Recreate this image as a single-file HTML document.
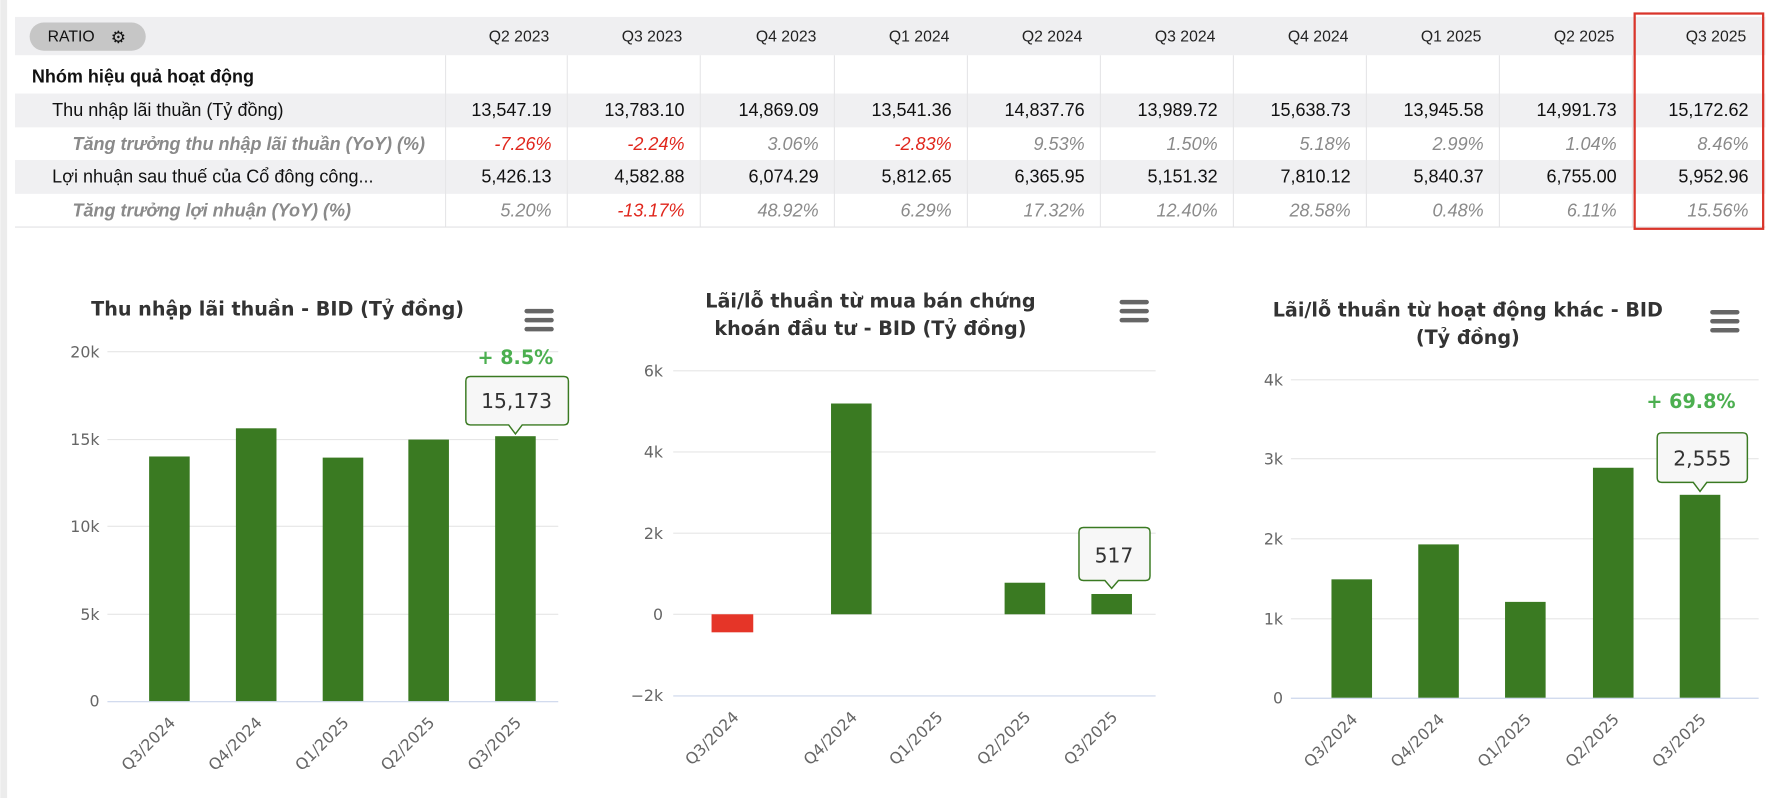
<!DOCTYPE html>
<html><head><meta charset="utf-8"><style>
html,body{margin:0;padding:0;background:#fff;overflow:hidden}
svg{display:block}
.t{font-family:"Liberation Sans",sans-serif}
.c{font-family:"DejaVu Sans","Liberation Sans",sans-serif}
</style></head><body>
<svg width="1768" height="798" viewBox="0 0 1568 708" xmlns="http://www.w3.org/2000/svg">
<rect x="0" y="0" width="1568" height="708" fill="#fff"/>
<rect x="0" y="0" width="6" height="708" fill="#ececec"/>
<!-- table -->
<g class="t">
<rect x="13" y="15" width="1553" height="34" fill="#efeff1"/>
<rect x="26" y="20" width="103" height="25" rx="12.5" fill="#c6c6c6"/>
<text x="42" y="37" font-size="14" fill="#111">RATIO</text>
<text x="98" y="38" font-size="15" fill="#111">⚙</text>
<g font-size="14" fill="#222" text-anchor="end">
<text x="487" y="37">Q2 2023</text><text x="605" y="37">Q3 2023</text><text x="724" y="37">Q4 2023</text><text x="842" y="37">Q1 2024</text><text x="960" y="37">Q2 2024</text><text x="1078" y="37">Q3 2024</text><text x="1196" y="37">Q4 2024</text><text x="1314" y="37">Q1 2025</text><text x="1432" y="37">Q2 2025</text><text x="1549" y="37">Q3 2025</text>
</g>
<rect x="13" y="83" width="1553" height="30" fill="#f0f0f2"/>
<rect x="13" y="142" width="1553" height="30" fill="#f0f0f2"/>
<g stroke="#e6e6e8" stroke-width="1">
<line x1="395" y1="49" x2="395" y2="201"/><line x1="503" y1="49" x2="503" y2="201"/><line x1="621" y1="49" x2="621" y2="201"/><line x1="740" y1="49" x2="740" y2="201"/><line x1="858" y1="49" x2="858" y2="201"/><line x1="976" y1="49" x2="976" y2="201"/><line x1="1094" y1="49" x2="1094" y2="201"/><line x1="1212" y1="49" x2="1212" y2="201"/><line x1="1330" y1="49" x2="1330" y2="201"/><line x1="1448" y1="49" x2="1448" y2="201"/>
</g>
<line x1="13" y1="201.5" x2="1566" y2="201.5" stroke="#e2e2e4"/>
<text x="28" y="73" font-size="16" font-weight="bold" fill="#111">Nhóm hiệu quả hoạt động</text>
<text x="46" y="103" font-size="16" fill="#111">Thu nhập lãi thuần (Tỷ đồng)</text>
<text x="64" y="133" font-size="16" font-weight="bold" font-style="italic" fill="#8a8a8a">Tăng trưởng thu nhập lãi thuần (YoY) (%)</text>
<text x="46" y="162" font-size="16" fill="#111">Lợi nhuận sau thuế của Cổ đông công...</text>
<text x="64" y="192" font-size="16" font-weight="bold" font-style="italic" fill="#8a8a8a">Tăng trưởng lợi nhuận (YoY) (%)</text>
<g font-size="16" fill="#111" text-anchor="end">
<text x="489" y="103">13,547.19</text><text x="607" y="103">13,783.10</text><text x="726" y="103">14,869.09</text><text x="844" y="103">13,541.36</text><text x="962" y="103">14,837.76</text><text x="1080" y="103">13,989.72</text><text x="1198" y="103">15,638.73</text><text x="1316" y="103">13,945.58</text><text x="1434" y="103">14,991.73</text><text x="1551" y="103">15,172.62</text>
<text x="489" y="162">5,426.13</text><text x="607" y="162">4,582.88</text><text x="726" y="162">6,074.29</text><text x="844" y="162">5,812.65</text><text x="962" y="162">6,365.95</text><text x="1080" y="162">5,151.32</text><text x="1198" y="162">7,810.12</text><text x="1316" y="162">5,840.37</text><text x="1434" y="162">6,755.00</text><text x="1551" y="162">5,952.96</text>
</g>
<g font-size="16" font-style="italic" fill="#8a8a8a" text-anchor="end">
<text x="489" y="133" fill="#e0261c">-7.26%</text><text x="607" y="133" fill="#e0261c">-2.24%</text><text x="726" y="133">3.06%</text><text x="844" y="133" fill="#e0261c">-2.83%</text><text x="962" y="133">9.53%</text><text x="1080" y="133">1.50%</text><text x="1198" y="133">5.18%</text><text x="1316" y="133">2.99%</text><text x="1434" y="133">1.04%</text><text x="1551" y="133">8.46%</text>
<text x="489" y="192">5.20%</text><text x="607" y="192" fill="#e0261c">-13.17%</text><text x="726" y="192">48.92%</text><text x="844" y="192">6.29%</text><text x="962" y="192">17.32%</text><text x="1080" y="192">12.40%</text><text x="1198" y="192">28.58%</text><text x="1316" y="192">0.48%</text><text x="1434" y="192">6.11%</text><text x="1551" y="192">15.56%</text>
</g>
<rect x="1450" y="12" width="114" height="191" fill="none" stroke="#d9352b" stroke-width="2"/>
</g>

<!-- charts -->
<g class="c">
<!-- chart 1 -->
<text x="246" y="280" font-size="17" font-weight="bold" fill="#333" text-anchor="middle">Thu nhập lãi thuần - BID (Tỷ đồng)</text>
<g fill="#666"><rect x="465" y="274" width="26" height="4" rx="2"/><rect x="465" y="282" width="26" height="4" rx="2"/><rect x="465" y="290" width="26" height="4" rx="2"/></g>
<g stroke="#e6e6e6"><line x1="95" y1="312" x2="495" y2="312"/><line x1="95" y1="390" x2="495" y2="390"/><line x1="95" y1="467" x2="495" y2="467"/><line x1="95" y1="545" x2="495" y2="545"/></g>
<line x1="95" y1="622.5" x2="495" y2="622.5" stroke="#ccd6eb"/>
<g font-size="14" fill="#666" text-anchor="end"><text x="88" y="317">20k</text><text x="88" y="395">15k</text><text x="88" y="472">10k</text><text x="88" y="550">5k</text><text x="88" y="627">0</text></g>
<g fill="#3a7a22"><rect x="132" y="405" width="36" height="217"/><rect x="209" y="380" width="36" height="242"/><rect x="286" y="406" width="36" height="216"/><rect x="362" y="390" width="36" height="232"/><rect x="439" y="387" width="36" height="235"/></g>
<text x="457" y="323" font-size="17" font-weight="bold" fill="#4caf50" text-anchor="middle">+ 8.5%</text>
<path d="M417 334 H500 Q504 334 504 338 V373 Q504 377 500 377 H463 L457 385 L451 377 H417 Q413 377 413 373 V338 Q413 334 417 334 Z" fill="#f7f7f7" stroke="#3a7a22" stroke-width="1.3"/>
<text x="458" y="362" font-size="18" fill="#333" text-anchor="middle">15,173</text>
<g font-size="14" fill="#666" text-anchor="end">
<text transform="translate(156,642) rotate(-45)">Q3/2024</text><text transform="translate(233,642) rotate(-45)">Q4/2024</text><text transform="translate(310,642) rotate(-45)">Q1/2025</text><text transform="translate(386,642) rotate(-45)">Q2/2025</text><text transform="translate(463,642) rotate(-45)">Q3/2025</text>
</g>

<!-- chart 2 -->
<text x="772" y="273" font-size="17" font-weight="bold" fill="#333" text-anchor="middle">Lãi/lỗ thuần từ mua bán chứng</text>
<text x="772" y="297" font-size="17" font-weight="bold" fill="#333" text-anchor="middle">khoán đầu tư - BID (Tỷ đồng)</text>
<g fill="#666"><rect x="993" y="266" width="26" height="4" rx="2"/><rect x="993" y="274" width="26" height="4" rx="2"/><rect x="993" y="282" width="26" height="4" rx="2"/></g>
<g stroke="#e6e6e6"><line x1="597" y1="329" x2="1025" y2="329"/><line x1="597" y1="401" x2="1025" y2="401"/><line x1="597" y1="473" x2="1025" y2="473"/><line x1="597" y1="545" x2="1025" y2="545"/></g>
<line x1="597" y1="617.5" x2="1025" y2="617.5" stroke="#ccd6eb"/>
<g font-size="14" fill="#666" text-anchor="end"><text x="588" y="334">6k</text><text x="588" y="406">4k</text><text x="588" y="478">2k</text><text x="588" y="550">0</text><text x="588" y="622">−2k</text></g>
<rect x="631" y="545" width="37" height="16" fill="#e53528"/>
<g fill="#3a7a22"><rect x="737" y="358" width="36" height="187"/><rect x="891" y="517" width="36" height="28"/><rect x="968" y="527" width="36" height="18"/></g>
<path d="M961 468 H1016 Q1020 468 1020 472 V511 Q1020 515 1016 515 H992 L986 522 L980 515 H961 Q957 515 957 511 V472 Q957 468 961 468 Z" fill="#f7f7f7" stroke="#3a7a22" stroke-width="1.3"/>
<text x="988" y="499" font-size="18" fill="#333" text-anchor="middle">517</text>
<g font-size="14" fill="#666" text-anchor="end">
<text transform="translate(656,637) rotate(-45)">Q3/2024</text><text transform="translate(761,637) rotate(-45)">Q4/2024</text><text transform="translate(837,637) rotate(-45)">Q1/2025</text><text transform="translate(915,637) rotate(-45)">Q2/2025</text><text transform="translate(992,637) rotate(-45)">Q3/2025</text>
</g>

<!-- chart 3 -->
<text x="1302" y="281" font-size="17" font-weight="bold" fill="#333" text-anchor="middle">Lãi/lỗ thuần từ hoạt động khác - BID</text>
<text x="1302" y="305" font-size="17" font-weight="bold" fill="#333" text-anchor="middle">(Tỷ đồng)</text>
<g fill="#666"><rect x="1517" y="275" width="26" height="4" rx="2"/><rect x="1517" y="283" width="26" height="4" rx="2"/><rect x="1517" y="291" width="26" height="4" rx="2"/></g>
<g stroke="#e6e6e6"><line x1="1145" y1="337" x2="1560" y2="337"/><line x1="1145" y1="407" x2="1560" y2="407"/><line x1="1145" y1="478" x2="1560" y2="478"/><line x1="1145" y1="549" x2="1560" y2="549"/></g>
<line x1="1145" y1="619.5" x2="1560" y2="619.5" stroke="#ccd6eb"/>
<g font-size="14" fill="#666" text-anchor="end"><text x="1138" y="342">4k</text><text x="1138" y="412">3k</text><text x="1138" y="483">2k</text><text x="1138" y="554">1k</text><text x="1138" y="624">0</text></g>
<g fill="#3a7a22"><rect x="1181" y="514" width="36" height="105"/><rect x="1258" y="483" width="36" height="136"/><rect x="1335" y="534" width="36" height="85"/><rect x="1413" y="415" width="36" height="204"/><rect x="1490" y="439" width="36" height="180"/></g>
<text x="1500" y="362" font-size="17" font-weight="bold" fill="#4caf50" text-anchor="middle">+ 69.8%</text>
<path d="M1474 384 H1546 Q1550 384 1550 388 V424 Q1550 428 1546 428 H1514 L1508 436 L1502 428 H1474 Q1470 428 1470 424 V388 Q1470 384 1474 384 Z" fill="#f7f7f7" stroke="#3a7a22" stroke-width="1.3"/>
<text x="1510" y="413" font-size="18" fill="#333" text-anchor="middle">2,555</text>
<g font-size="14" fill="#666" text-anchor="end">
<text transform="translate(1205,639) rotate(-45)">Q3/2024</text><text transform="translate(1282,639) rotate(-45)">Q4/2024</text><text transform="translate(1359,639) rotate(-45)">Q1/2025</text><text transform="translate(1437,639) rotate(-45)">Q2/2025</text><text transform="translate(1514,639) rotate(-45)">Q3/2025</text>
</g>
</g>
</svg>
</body></html>
